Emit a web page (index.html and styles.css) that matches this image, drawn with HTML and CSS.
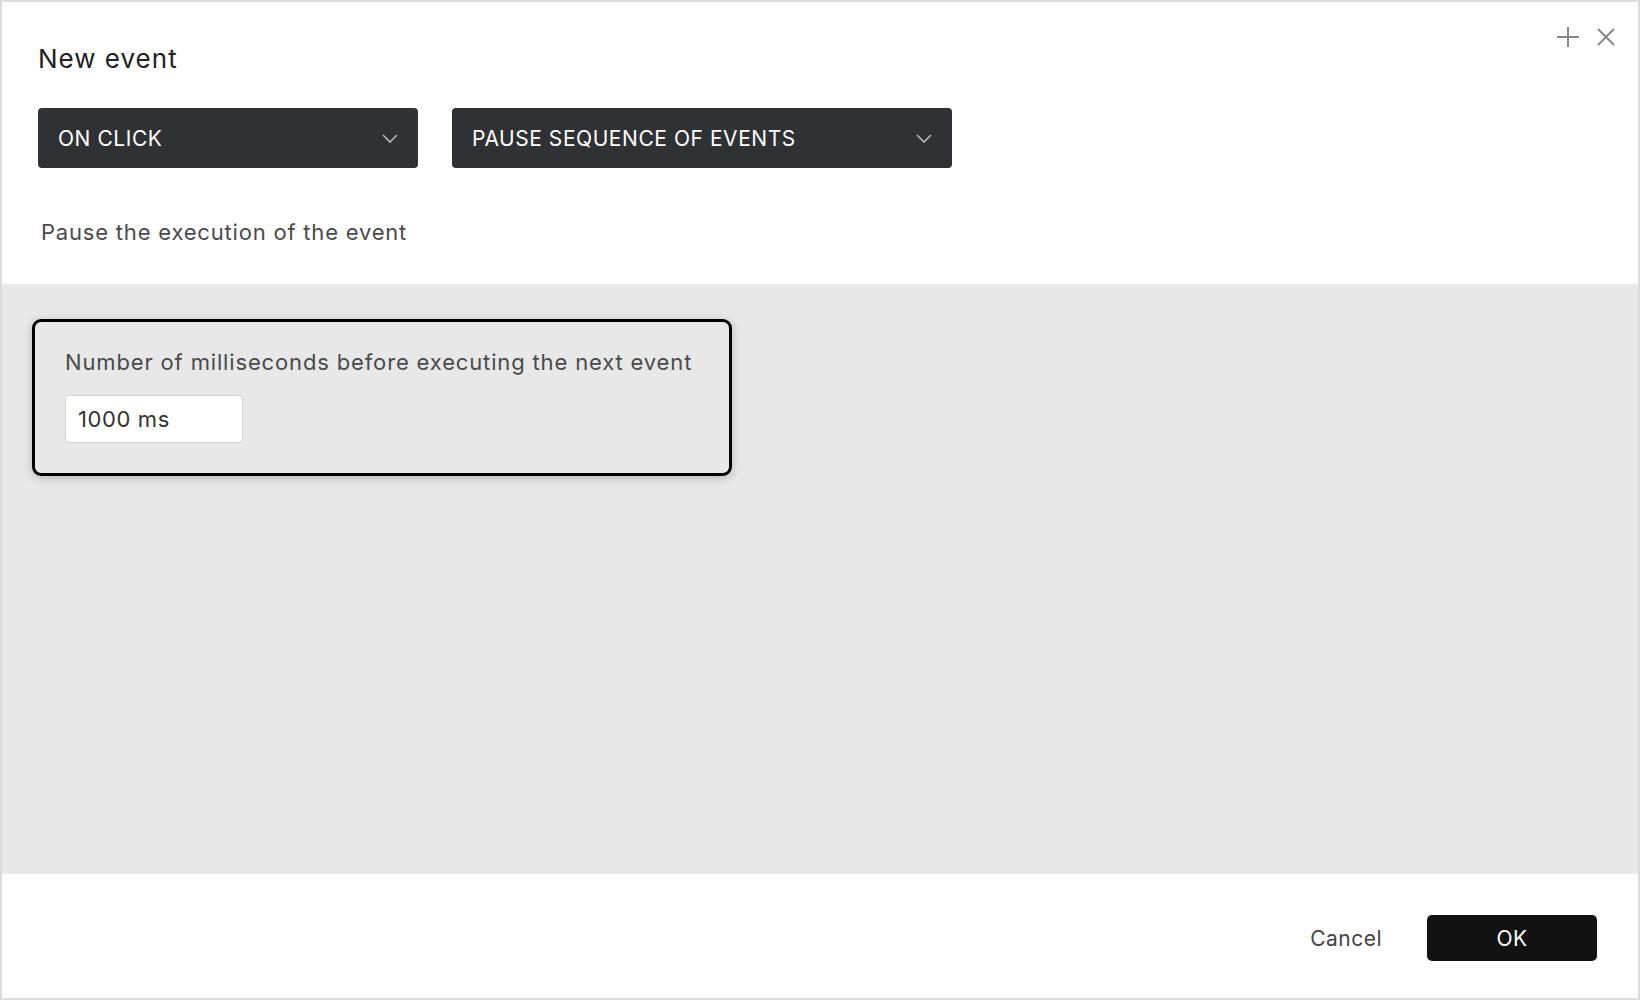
FILE: index.html
```html
<!DOCTYPE html>
<html>
<head>
<title>New event</title>
<link rel="stylesheet" href="styles.css">
</head>
<body>
<div class="dialog">
	<div class="dialog_head">
		<div class="head_row">
			<h1 class="title">New event</h1>
			<div class="win_tools">
				<svg class="tool_icon" width="22" height="22" viewBox="0 0 22 22"><line x1="11" y1="1" x2="11" y2="21"/><line x1="0" y1="11" x2="22" y2="11"/></svg>
				<svg class="tool_icon" width="18" height="18" viewBox="0 0 18 18"><line x1="1" y1="1" x2="17" y2="17"/><line x1="17" y1="1" x2="1" y2="17"/></svg>
			</div>
		</div>
		<div class="selects">
			<div class="select sel_trigger">
				<span>ON CLICK</span>
				<svg class="chevron" width="16" height="9" viewBox="0 0 16 9"><polyline points="1,1 8,8 15,1"/></svg>
			</div>
			<div class="select sel_action">
				<span>PAUSE SEQUENCE OF EVENTS</span>
				<svg class="chevron" width="16" height="9" viewBox="0 0 16 9"><polyline points="1,1 8,8 15,1"/></svg>
			</div>
		</div>
		<p class="desc">Pause the execution of the event</p>
	</div>
	<div class="dialog_body">
		<div class="param_card">
			<div class="param_label">Number of milliseconds before executing the next event</div>
			<div class="param_input">1000 ms</div>
		</div>
	</div>
	<div class="dialog_foot">
		<button class="btn_cancel">Cancel</button>
		<button class="btn_ok">OK</button>
	</div>
</div>
</body>
</html>
```

FILE: styles.css
```css
html, body{
	margin:0;
	padding:0;
	background:#fff;
}
body{
	font-family:"Inter", "Liberation Sans", sans-serif;
	color:#4a4a4d;
}
.dialog{
	width:1640px;
	height:1000px;
	border:2px solid #dcdcdc;
	box-sizing:border-box;
	display:flex;
	flex-direction:column;
}
.dialog_head{
	background:#fff;
	padding:24px 23px 38px 36px;
}
.head_row{
	display:flex;
	justify-content:space-between;
	align-items:flex-start;
}
.title{
	margin:17px 0 0 0;
	font-size:26px;
	line-height:32px;
	font-weight:400;
	letter-spacing:1px;
	color:#222;
}
.win_tools{
	display:flex;
	align-items:center;
	gap:18px;
}
.tool_icon{
	display:block;
	stroke:#878787;
	stroke-width:2;
	fill:none;
}
.selects{
	display:flex;
	gap:34px;
	margin-top:33px;
}
.select{
	height:60px;
	box-sizing:border-box;
	background:#303134;
	border-radius:4px;
	color:#fff;
	font-size:21px;
	letter-spacing:0.55px;
	display:flex;
	align-items:center;
	justify-content:space-between;
	padding:0 20px 0 20px;
}
.sel_trigger{
	width:380px;
}
.sel_action{
	width:500px;
}
.chevron{
	display:block;
	fill:none;
	stroke:#b3b3b3;
	stroke-width:1.7;
}
.desc{
	margin:50px 0 0 3px;
	font-size:22px;
	line-height:28px;
	letter-spacing:0.8px;
	color:#4a4a4d;
}
.dialog_body{
	flex:1;
	background:#e8e8e8;
	padding:35px 30px;
}
.param_card{
	width:700px;
	box-sizing:border-box;
	border:3px solid #000;
	border-radius:9px;
	padding:26px 30px 30px 30px;
	box-shadow:0 2px 10px rgba(0,0,0,0.22);
}
.param_label{
	font-size:22px;
	line-height:28px;
	letter-spacing:0.85px;
	color:#4a4a4d;
	white-space:nowrap;
}
.param_input{
	margin-top:19px;
	width:178px;
	height:48px;
	box-sizing:border-box;
	background:#fff;
	border:1px solid #cfd3d8;
	border-radius:4px;
	padding-left:12px;
	font-size:22px;
	line-height:46px;
	letter-spacing:0.6px;
	color:#333;
}
.dialog_foot{
	height:124px;
	box-sizing:border-box;
	background:#fff;
	display:flex;
	justify-content:flex-end;
	align-items:center;
	padding:4px 41px 0 0;
}
.btn_cancel{
	background:none;
	border:none;
	font-family:inherit;
	font-size:21px;
	letter-spacing:0.5px;
	color:#444;
	padding:0;
	margin-right:45px;
}
.btn_ok{
	width:170px;
	height:46px;
	background:#121212;
	border:none;
	border-radius:5px;
	color:#fff;
	font-family:inherit;
	font-size:21px;
	letter-spacing:0.5px;
}
```
